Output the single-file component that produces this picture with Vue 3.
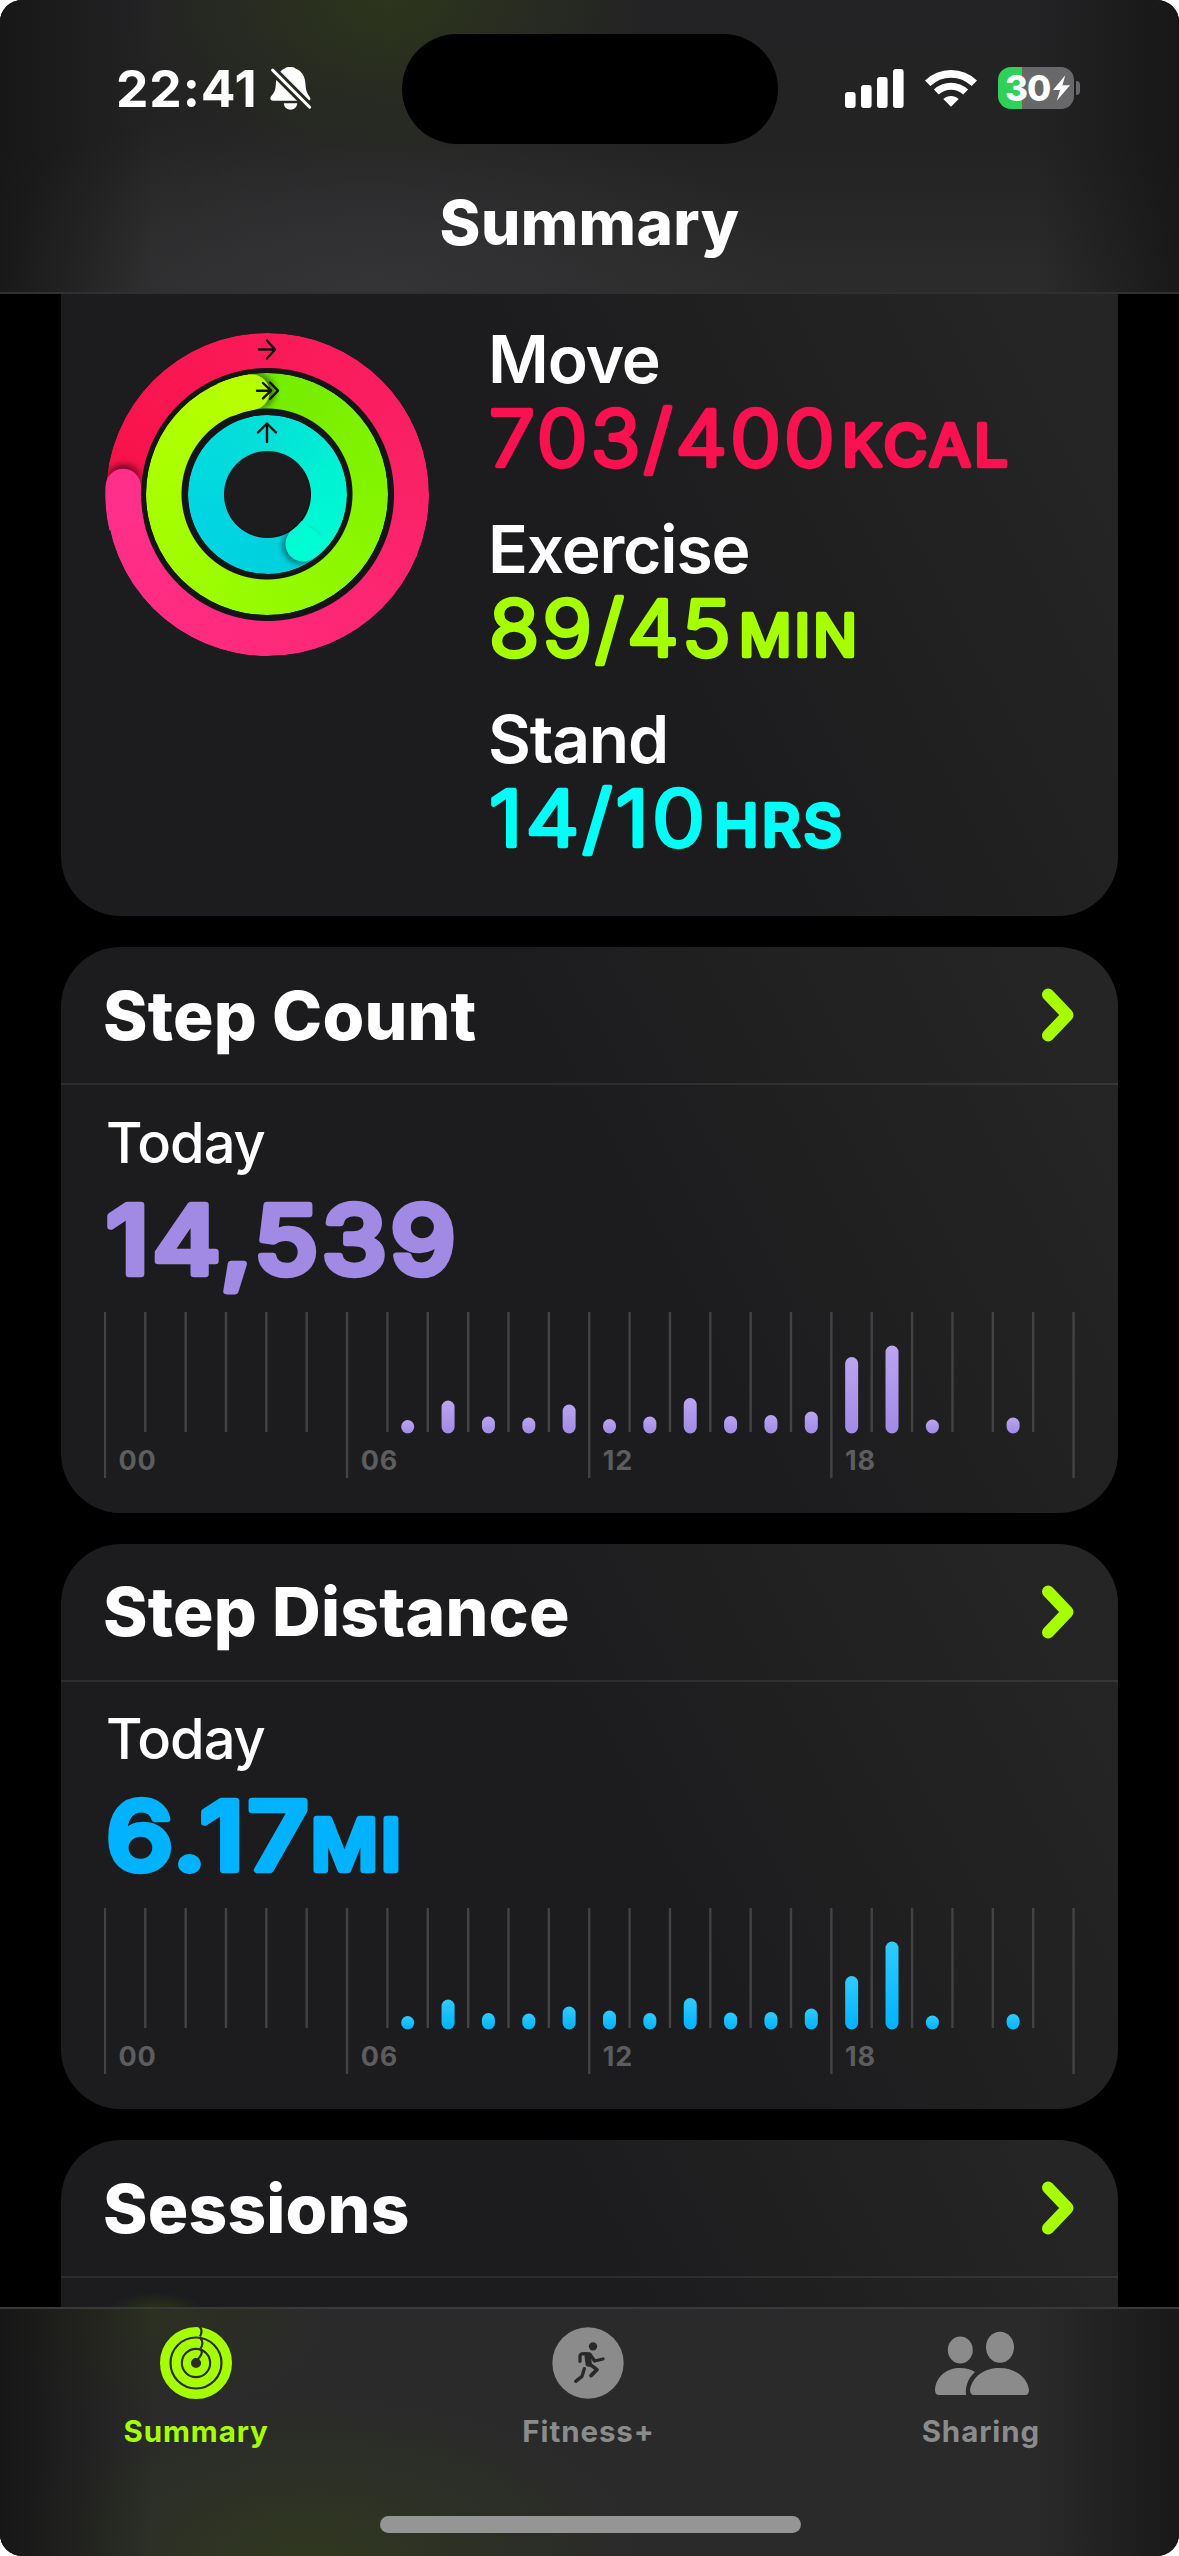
<!-- Activity summary screen -->
<template>
  <div class="screen">
    <header class="top">
      <div class="island"></div>
      <div class="status">
        <div class="left">
          <span class="time">22:41</span>
          <svg class="bell" viewBox="495 48 128 134">
            <mask id="bell-cut">
              <rect x="480" y="30" width="160" height="170" fill="#fff" />
              <path d="M490 46 L630 186" stroke="#000" stroke-width="27" />
            </mask>
            <g fill="#fff" mask="url(#bell-cut)">
              <path d="M505 152C494 152 494 142 502 134C512 122 512 112 513 98C515 70 530 58 540 54C545 48 568 48 572 54C592 60 602 80 603 100C604 118 606 128 616 140C620 148 618 152 610 152Z" />
              <path d="M537 160H578C576 186 539 186 537 160Z" />
            </g>
            <path d="M503 59L616 172" stroke="#fff" stroke-width="9" stroke-linecap="round" />
          </svg>
        </div>
        <div class="right">
          <svg class="signal" viewBox="0 0 60 39" fill="#fff">
            <rect x="0" y="23" width="10.6" height="16" rx="3" />
            <rect x="16" y="16" width="10.6" height="23" rx="3" />
            <rect x="32" y="8" width="10.6" height="31" rx="3" />
            <rect x="48" y="0" width="10.6" height="39" rx="3" />
          </svg>
          <svg class="wifi" viewBox="286 56 156 117" fill="none" stroke="#fff">
            <path d="M294 99A100 100 0 0 1 434 99" stroke-width="23" />
            <path d="M320 125A64 64 0 0 1 408 125" stroke-width="21" />
            <path d="M364 169L341 146A33 33 0 0 1 387 146Z" fill="#fff" stroke="none" />
          </svg>
          <div class="battery">
            <span>30</span>
            <svg viewBox="0 0 18 27"><path d="M13 0L0 15.500H7.500L4 27L18 10.500H10Z" fill="#fff" /></svg>
          </div>
          <div class="nub"></div>
        </div>
      </div>
      <h1>Summary</h1>
    </header>

    <main>
      <section class="card rings-card">
        <div class="rings">
          <div class="ring move"></div>
          <div class="ring exercise"></div>
          <div class="ring stand"></div>
          <svg class="caps" viewBox="-162 -162 324 324">
            <defs>
              <filter id="soft" x="-50%" y="-50%" width="200%" height="200%">
                <feGaussianBlur stdDeviation="3" />
              </filter>
              <mask v-for="c in caps" :id="'ring-' + c.id" :key="c.id" maskUnits="userSpaceOnUse" x="-162" y="-162" width="324" height="324">
                <circle :r="c.r" fill="none" stroke="#fff" stroke-width="35.500" />
              </mask>
            </defs>
            <g v-for="c in caps" :key="c.id">
              <g :mask="`url(#ring-${c.id})`">
                <circle v-bind="point(c, c.angle + c.shift)" r="17.500" fill="#000" opacity="0.5" filter="url(#soft)" />
              </g>
              <path :d="tail(c)" fill="none" :stroke="c.color" stroke-width="35.500" />
              <circle v-bind="point(c, c.angle)" r="17.750" :fill="c.color" />
            </g>
            <g fill="none" stroke="#10100c" stroke-width="2.400" stroke-linecap="round" stroke-linejoin="round">
              <path d="M-8-144.500H8M0-153.500L8-144.500L0-135.500" />
              <path d="M-10-103.300H4M-4-111L4-103.300L-4-95.600M3-111.500L11-103.300L3-95" />
              <path d="M0-52V-70M-9-61.500L0-70.500L9-61.500" />
            </g>
          </svg>
        </div>
        <div class="goals">
          <div v-for="g in goals" :key="g.label" class="goal">
            <div class="label">{{ g.label }}</div>
            <svg width="560" height="110" class="rounded" :fill="g.color" :stroke="g.color">
              <text x="3" y="67" class="num" :textLength="g.width" lengthAdjust="spacingAndGlyphs">{{ g.value }}</text>
              <text :x="g.unitX" y="67" class="unit" :textLength="g.unitWidth" lengthAdjust="spacingAndGlyphs">{{ g.unit }}</text>
            </svg>
          </div>
        </div>
      </section>

      <section v-for="m in metrics" :key="m.title" class="card metric">
        <div class="card-head">
          <h2>{{ m.title }}</h2>
          <svg class="chevron" viewBox="0 0 34 56"><path d="M7 7.500L26.500 28L7 48.500" /></svg>
        </div>
        <div class="card-body">
          <div class="today">Today</div>
          <svg width="600" height="139" class="rounded big" :fill="m.color" :stroke="m.color">
            <text x="2" y="101" class="num" :textLength="m.width" lengthAdjust="spacingAndGlyphs">{{ m.value }}</text>
            <text v-if="m.unit" :x="m.unitX" y="101" class="unit" :textLength="m.unitWidth" lengthAdjust="spacingAndGlyphs">{{ m.unit }}</text>
          </svg>
          <svg class="chart" width="972" height="168">
            <defs>
              <linearGradient :id="m.id" x1="0" y1="0" x2="0" y2="1">
                <stop offset="0" :stop-color="m.light" />
                <stop offset="1" :stop-color="m.color" />
              </linearGradient>
            </defs>
            <rect v-for="i in 25" :key="'l' + i" :x="(i - 1) * step - 0.300" y="0" width="2.400" :height="(i - 1) % 6 ? 120 : 166" fill="#434345" />
            <template v-for="(h, i) in m.bars" :key="'b' + i">
              <rect v-if="h" :x="(i + 0.500) * step - 5.500" :y="121.500 - h" width="13" :height="h" rx="6.500" :fill="`url(#${m.id})`" />
            </template>
            <text v-for="t in [0, 6, 12, 18]" :key="'t' + t" :x="t * step + 14.500" y="158">{{ String(t).padStart(2, '0') }}</text>
          </svg>
        </div>
      </section>

      <section class="card sessions">
        <div class="card-head">
          <h2>Sessions</h2>
          <svg class="chevron" viewBox="0 0 34 56"><path d="M7 7.500L26.500 28L7 48.500" /></svg>
        </div>
        <div class="peek"></div>
      </section>
    </main>

    <nav class="tabs">
      <div class="tab active">
        <svg width="74" height="74" viewBox="-37 -37 74 74" fill="none">
          <g stroke="currentColor">
            <circle r="31.300" stroke-width="9.400" />
            <circle r="19.800" stroke-width="9.200" />
            <circle r="9.100" stroke-width="8" />
          </g>
          <path d="M3-37C6-34 6-30 4-26.500M4-25.500C7-22 7-18 4.500-14.500M4.500-14C7-11 5-7 2-4" stroke="#2d3028" stroke-width="2.200" />
        </svg>
        <span>Summary</span>
      </div>
      <div class="tab">
        <svg width="74" height="74" viewBox="62 47 222 222" fill="none">
          <circle cx="173" cy="158" r="107" fill="currentColor" />
          <circle cx="188" cy="108" r="12.500" fill="#29292a" />
          <g stroke="#29292a" stroke-linecap="round" stroke-linejoin="round" stroke-width="10">
            <path d="M149 153V136Q151 130 160 130L178 131L193 152L218 146" />
            <path d="M172 137L175 160" stroke-width="19" />
            <path d="M179 162L200 178L182 196" stroke-width="11" />
            <path d="M162 175L155 198L136 213" />
          </g>
        </svg>
        <span>Fitness+</span>
      </div>
      <div class="tab">
        <svg width="96" height="74" viewBox="-2 -6 96 74" fill="currentColor">
          <ellipse cx="25.300" cy="18" rx="12.500" ry="13.500" />
          <ellipse cx="65" cy="15.300" rx="14" ry="15.500" />
          <path d="M4 63Q0 63 0 58C1 44 12 36 25 36Q34 36 40 40C33 46 30 55 31 63Z" />
          <path d="M39 63Q35 63 35 58C37 44 50 36 64.500 36S92 44 94 58Q94 63 90 63Z" />
        </svg>
        <span>Sharing</span>
      </div>
      <div class="home"></div>
    </nav>
  </div>
</template>

<script setup>
// chart column width
const step = 40.36;

const goals = [
  { label: 'Move', value: '703/400', unit: 'KCAL', color: '#fa114f', width: 349, unitX: 356, unitWidth: 169 },
  { label: 'Exercise', value: '89/45', unit: 'MIN', color: '#a6ff00', width: 245, unitX: 253, unitWidth: 121 },
  { label: 'Stand', value: '14/10', unit: 'HRS', color: '#00fff6', width: 219, unitX: 228, unitWidth: 131 },
];

const metrics = [
  {
    id: 'count', title: 'Step Count', value: '14,539', color: '#a18ae4', light: '#bba5f0', width: 353,
    bars: [0, 0, 0, 0, 0, 0, 0, 13.5, 33, 17, 16, 29, 14.5, 17, 35.5, 17.5, 18.5, 22, 76.5, 88, 14, 0, 16, 0],
  },
  {
    id: 'distance', title: 'Step Distance', value: '6.17', unit: 'MI', color: '#00b2ff', light: '#30cbff', width: 206, unitX: 207, unitWidth: 93,
    bars: [0, 0, 0, 0, 0, 0, 0, 13.5, 30, 16.5, 16, 23, 19, 16.5, 31.5, 17, 17.5, 21, 53.5, 88, 14, 0, 15.5, 0],
  },
];

// ring end caps, angle in degrees clockwise from the top
const caps = [
  { id: 'move', r: 144, angle: 273, shift: 2, color: '#ff2f8a' },
  { id: 'exercise', r: 103, angle: 351.5, shift: 3, color: '#b7ff00' },
  { id: 'stand', r: 61.7, angle: 144, shift: 3, color: '#00fcd3' },
];

const point = (c, deg) => {
  const a = (deg * Math.PI) / 180;
  return { cx: c.r * Math.sin(a), cy: -c.r * Math.cos(a) };
};

const tail = (c) => {
  const from = point(c, c.angle - 16);
  const to = point(c, c.angle);
  return `M${from.cx} ${from.cy}A${c.r} ${c.r} 0 0 1 ${to.cx} ${to.cy}`;
};
</script>

<style>
body {
  margin: 0;
  background: #fff;
}
</style>

<style scoped>
.screen {
  width: 1179px;
  height: 2556px;
  display: flex;
  flex-direction: column;
  overflow: hidden;
  border-radius: 22px;
  background: #000;
  color: #fff;
  font-family: Inter, "Liberation Sans", sans-serif;
}
svg {
  display: block;
  flex: none;
}
h1, h2 {
  margin: 0;
}
.top {
  position: relative;
  box-sizing: border-box;
  height: 294px;
  flex: none;
  border-bottom: 2px solid #303032;
  background:
    linear-gradient(90deg, rgba(20, 20, 20, 0.8), transparent 13%, transparent 88%, rgba(20, 20, 20, 0.8)),
    radial-gradient(ellipse 260px 170px at 390px 0, #2d351c, transparent),
    radial-gradient(ellipse 420px 200px at 370px 294px, #343437, transparent),
    linear-gradient(#232325, #232323 50%, #2c2c2c);
}
.island {
  position: absolute;
  left: 402px;
  top: 34px;
  width: 376px;
  height: 110px;
  border-radius: 55px;
  background: #000;
}
.status {
  display: flex;
  justify-content: space-between;
  height: 176px;
  padding: 0 99px 0 116px;
}
.left, .right {
  display: flex;
  align-items: center;
  height: 176px;
}
.time {
  width: 139px;
  font-size: 51.500px;
  font-weight: 750;
  letter-spacing: 0.9px;
}
.bell {
  width: 42px;
  height: 45px;
  margin-left: 15px;
}
.signal {
  width: 60px;
  height: 39px;
}
.wifi {
  width: 52px;
  height: 39px;
  margin-left: 20px;
}
.battery {
  box-sizing: border-box;
  width: 76px;
  height: 42px;
  margin-left: 21px;
  padding-left: 7px;
  display: flex;
  align-items: center;
  border-radius: 13px;
  background: linear-gradient(90deg, #30d158 24px, #68686a 24px);
}
.battery span {
  width: 48px;
  font-size: 35px;
  font-weight: 800;
  letter-spacing: -1px;
}
.battery svg {
  width: 17px;
  height: 26px;
}
.nub {
  width: 4px;
  height: 14px;
  margin-left: 2px;
  border-radius: 0 4px 4px 0;
  background: #68686a;
}
h1 {
  text-align: center;
  font-size: 62px;
  font-weight: 770;
  line-height: 94px;
  letter-spacing: 0.4px;
}
main {
  flex: 1;
  min-height: 0;
  overflow: hidden;
  display: flex;
  flex-direction: column;
  gap: 31px;
  padding: 0 61px;
}
.card {
  flex: none;
  border-radius: 60px;
  overflow: hidden;
  background: linear-gradient(62deg, #1c1c1e 52%, #252525 94%);
}
.rings-card {
  box-sizing: border-box;
  height: 622px;
  display: flex;
  gap: 57px;
  padding: 25px 0 0 44px;
  border-radius: 0 0 60px 60px;
}
.rings {
  display: grid;
  place-items: center;
  width: 324px;
  height: 324px;
  margin-top: 13px;
  border-radius: 50%;
  background: radial-gradient(circle, transparent 42px, #151516 43px, #151516 155px, transparent 156px);
}
.ring, .caps {
  grid-area: 1 / 1;
  border-radius: 50%;
}
.caps {
  width: 324px;
  height: 324px;
  z-index: 1;
}
.move {
  width: 323px;
  height: 323px;
  background: conic-gradient(from 273deg, #f9124a, #fa1a58 25%, #fa2268 50%, #ff2a7c 75%, #ff2f8a);
  mask: radial-gradient(circle, transparent 126px, #000 127px);
}
.exercise {
  width: 242px;
  height: 242px;
  background: conic-gradient(from 352deg, #72ec00, #86f500 30%, #98fb00 55%, #aaff00 80%, #b7ff00);
  mask: radial-gradient(circle, transparent 85px, #000 86px);
}
.stand {
  width: 159px;
  height: 159px;
  background: conic-gradient(from 144deg, #00cfdc, #02d5e2 30%, #04e0d8 60%, #00f2d3 80%, #00fcd3);
  mask: radial-gradient(circle, transparent 43px, #000 44px);
}
.label {
  height: 80px;
  line-height: 80px;
  margin-left: 2px;
  font-size: 66px;
  font-weight: 600;
  letter-spacing: -1.2px;
}
/* rounded numerals: thin weight with a round-joined outline */
.rounded {
  overflow: visible;
  stroke-width: 4.5px;
  stroke-linejoin: round;
}
.num {
  font-size: 77px;
  font-weight: 300;
  letter-spacing: 3px;
}
.unit {
  font-size: 57px;
  font-weight: 400;
  letter-spacing: 3px;
}
.big {
  stroke-width: 6.500px;
}
.big .num {
  font-size: 95px;
  font-weight: 550;
  letter-spacing: 3px;
}
.big .unit {
  font-size: 70px;
  font-weight: 550;
  letter-spacing: 3px;
}
.metric {
  height: 565.500px;
}
.card-head {
  height: 136px;
  display: flex;
  align-items: center;
  justify-content: space-between;
  padding: 0 43px 0 42px;
  border-bottom: 2px solid rgba(255, 255, 255, 0.08);
}
h2 {
  font-size: 67.500px;
  font-weight: 800;
  letter-spacing: 0.2px;
}
.chevron {
  width: 34px;
  height: 56px;
}
.chevron path {
  fill: none;
  stroke: #a6ff00;
  stroke-width: 12px;
  stroke-linecap: round;
  stroke-linejoin: round;
}
.card-body {
  padding: 27.500px 43px 0;
}
.today {
  height: 60px;
  line-height: 60px;
  margin-left: 2px;
  font-size: 56px;
  font-weight: 500;
  letter-spacing: -1px;
}
.chart text {
  fill: #5d5d60;
  font-size: 27px;
  font-weight: 700;
  letter-spacing: 0.8px;
}
.sessions {
  height: 300px;
}
.peek {
  height: 120px;
  background: radial-gradient(ellipse 48px 18px at 95px 33px, #2c3716, transparent);
}
.tabs {
  position: relative;
  box-sizing: border-box;
  height: 249px;
  flex: none;
  display: grid;
  grid-template-columns: repeat(3, 1fr);
  padding: 17px 2px 0 0;
  border-top: 2px solid #39393b;
  background:
    linear-gradient(90deg, rgba(20, 20, 20, 0.9), transparent 13%, transparent 88%, rgba(20, 20, 20, 0.8)),
    radial-gradient(ellipse 330px 160px at 310px 249px, #303720, transparent),
    radial-gradient(ellipse 180px 110px at 150px 0, #2c301f, transparent),
    #2a2a2b;
}
.tab {
  display: flex;
  flex-direction: column;
  align-items: center;
  gap: 11px;
  color: #8b8b8b;
  font-size: 29.500px;
  font-weight: 650;
  line-height: 40px;
  letter-spacing: 0.9px;
}
.active {
  color: #a6ff00;
}
.home {
  position: absolute;
  left: 380px;
  bottom: 23px;
  width: 421px;
  height: 17px;
  border-radius: 9px;
  background: #959595;
}
</style>
